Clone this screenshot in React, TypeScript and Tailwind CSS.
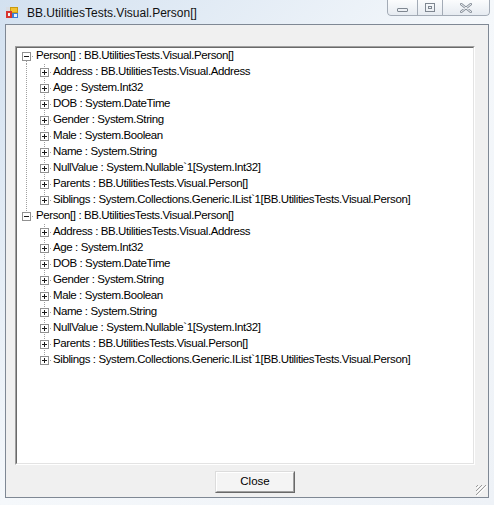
import type { ReactNode } from "react";

type Row = { text: string; level: 0 | 1; lastRoot: boolean; lastChild?: boolean };

const CHILDREN = [
  "Address : BB.UtilitiesTests.Visual.Address",
  "Age : System.Int32",
  "DOB : System.DateTime",
  "Gender : System.String",
  "Male : System.Boolean",
  "Name : System.String",
  "NullValue : System.Nullable`1[System.Int32]",
  "Parents : BB.UtilitiesTests.Visual.Person[]",
  "Siblings : System.Collections.Generic.IList`1[BB.UtilitiesTests.Visual.Person]",
];

const ROOT = "Person[] : BB.UtilitiesTests.Visual.Person[]";

const ROWS: Row[] = [0, 1].flatMap((r) => [
  { text: ROOT, level: 0 as const, lastRoot: r === 1 },
  ...CHILDREN.map((c, i) => ({
    text: c,
    level: 1 as const,
    lastRoot: r === 1,
    lastChild: i === CHILDREN.length - 1,
  })),
]);

const DOT = { stroke: "#a0a0a0", strokeWidth: 1, strokeDasharray: "1 1" };

function ExpandBox({ x, open }: { x: number; open: boolean }) {
  return (
    <g shapeRendering="crispEdges">
      <rect x={x + 0.5} y={4.5} width={8} height={8} fill="#fff" stroke="#919191" />
      <line x1={x + 2} y1={8.5} x2={x + 7} y2={8.5} stroke="#1a1a1a" />
      {!open && <line x1={x + 4.5} y1={6} x2={x + 4.5} y2={11} stroke="#1a1a1a" />}
    </g>
  );
}

function Gutter({ row }: { row: Row }) {
  if (row.level === 0) {
    return (
      <svg width={18} height={16} className="shrink-0" shapeRendering="crispEdges">
        {row.lastRoot ? (
          <line x1={8.5} y1={0} x2={8.5} y2={4} {...DOT} />
        ) : (
          <line x1={8.5} y1={13} x2={8.5} y2={16} {...DOT} />
        )}
        <line x1={14} y1={8.5} x2={16} y2={8.5} {...DOT} />
        <ExpandBox x={4} open />
      </svg>
    );
  }
  return (
    <svg width={35} height={16} className="shrink-0" shapeRendering="crispEdges">
      {!row.lastRoot && <line x1={8.5} y1={0} x2={8.5} y2={16} {...DOT} />}
      <line x1={26.5} y1={0} x2={26.5} y2={row.lastChild ? 4 : 16} {...DOT} />
      <line x1={32} y1={8.5} x2={34} y2={8.5} {...DOT} />
      <ExpandBox x={22} open={false} />
    </svg>
  );
}

function CaptionButton({ className, children }: { className: string; children: ReactNode }) {
  return (
    <div
      className={`flex h-[16px] items-center justify-center border border-t-0 border-[#a3abb6] bg-gradient-to-b from-[#fbfcfd] to-[#e6ebf1] ${className}`}
    >
      {children}
    </div>
  );
}

function AppIcon() {
  return (
    <svg width={12} height={11} viewBox="0 0 12 11" className="shrink-0" shapeRendering="crispEdges">
      <rect x={0} y={0} width={4} height={4} fill="#d9dde3" />
      <rect x={4} y={0} width={8} height={6} fill="#f2c230" />
      <rect x={4.5} y={0.5} width={7} height={5} fill="none" stroke="#c99a10" />
      <rect x={0} y={4} width={6} height={7} fill="#d8352f" />
      <rect x={2} y={6} width={2} height={3} fill="#f4f4f4" />
      <rect x={6} y={6} width={6} height={5} fill="#3d7fd6" />
      <rect x={8} y={7} width={3} height={3} fill="#e8f0fb" />
    </svg>
  );
}

export default function App() {
  return (
    <div
      className="flex h-[505px] w-[494px] flex-col bg-gradient-to-br from-[#d3e1f0] via-[#f5f8fb] to-[#eef2f7] px-[5px] pb-[7px]"
      style={{ fontFamily: '"Liberation Sans", Arial, sans-serif' }}
    >
      <div className="-mx-[5px] flex h-[24px] shrink-0">
        <div className="flex items-center gap-[9px] pl-[6px] pt-[1px]">
          <AppIcon />
          <span className="text-[12px] leading-none text-[#111]">BB.UtilitiesTests.Visual.Person[]</span>
        </div>
        <div className="ml-auto mr-[4px] flex self-start overflow-hidden rounded-b-[4px]">
          <CaptionButton className="w-[31px] rounded-bl-[4px]">
            <div className="mt-[5px] h-[4px] w-[11px] rounded-[1px] border border-[#7f8791]" />
          </CaptionButton>
          <CaptionButton className="w-[25px] border-l-0">
            <div className="flex h-[9px] w-[10px] items-center justify-center border border-[#7f8791]">
              <div className="h-[3px] w-[4px] border border-[#7f8791]" />
            </div>
          </CaptionButton>
          <CaptionButton className="w-[47px] rounded-br-[4px] border-l-0">
            <svg width={12} height={10} viewBox="0 0 12 10">
              <path
                d="M1 1 L11 9 M11 1 L1 9"
                stroke="#8a929c"
                strokeWidth={2.6}
                strokeLinecap="round"
              />
              <path
                d="M1 1 L11 9 M11 1 L1 9"
                stroke="#f3f5f8"
                strokeWidth={1}
                strokeLinecap="round"
              />
            </svg>
          </CaptionButton>
        </div>
      </div>

      <div className="relative flex flex-1 flex-col border border-[#7f8894] bg-[#f0f0f0]">
        <div className="ml-[9px] mt-[21px] h-[419px] w-[460px] border border-b-white border-l-[#a0a0a0] border-r-white border-t-[#a0a0a0]">
          <div className="h-full w-full overflow-hidden border border-b-[#e3e3e3] border-l-[#696969] border-r-[#e3e3e3] border-t-[#696969] bg-white pl-[1px]">
            {ROWS.map((row, i) => (
              <div key={i} className="flex h-4 items-center">
                <Gutter row={row} />
                <span className="whitespace-nowrap text-[11.5px] leading-none tracking-[-0.4px] text-black">
                  {row.text}
                </span>
              </div>
            ))}
          </div>
        </div>

        <div className="ml-[209px] mt-[6px] h-[22px] w-[80px] border border-b-[#696969] border-l-[#dcdcdc] border-r-[#696969] border-t-[#dcdcdc]">
          <div className="flex h-full w-full items-center justify-center border border-b-[#a0a0a0] border-l-white border-r-[#a0a0a0] border-t-white bg-[#f4f4f4] text-[11.5px] leading-none text-black">
            Close
          </div>
        </div>

        <svg
          width={12}
          height={12}
          viewBox="0 0 12 12"
          className="absolute bottom-[1px] right-[1px]"
          shapeRendering="crispEdges"
        >
          {[0, 4, 8].map((o) => (
            <g key={o}>
              <path d={`M${11 - o} 1 L1 ${11 - o}`} stroke="#ffffff" strokeWidth={1} transform="translate(1 1)" />
              <path d={`M${11 - o} 1 L1 ${11 - o}`} stroke="#9a9a9a" strokeWidth={1} />
            </g>
          ))}
        </svg>
      </div>
    </div>
  );
}
